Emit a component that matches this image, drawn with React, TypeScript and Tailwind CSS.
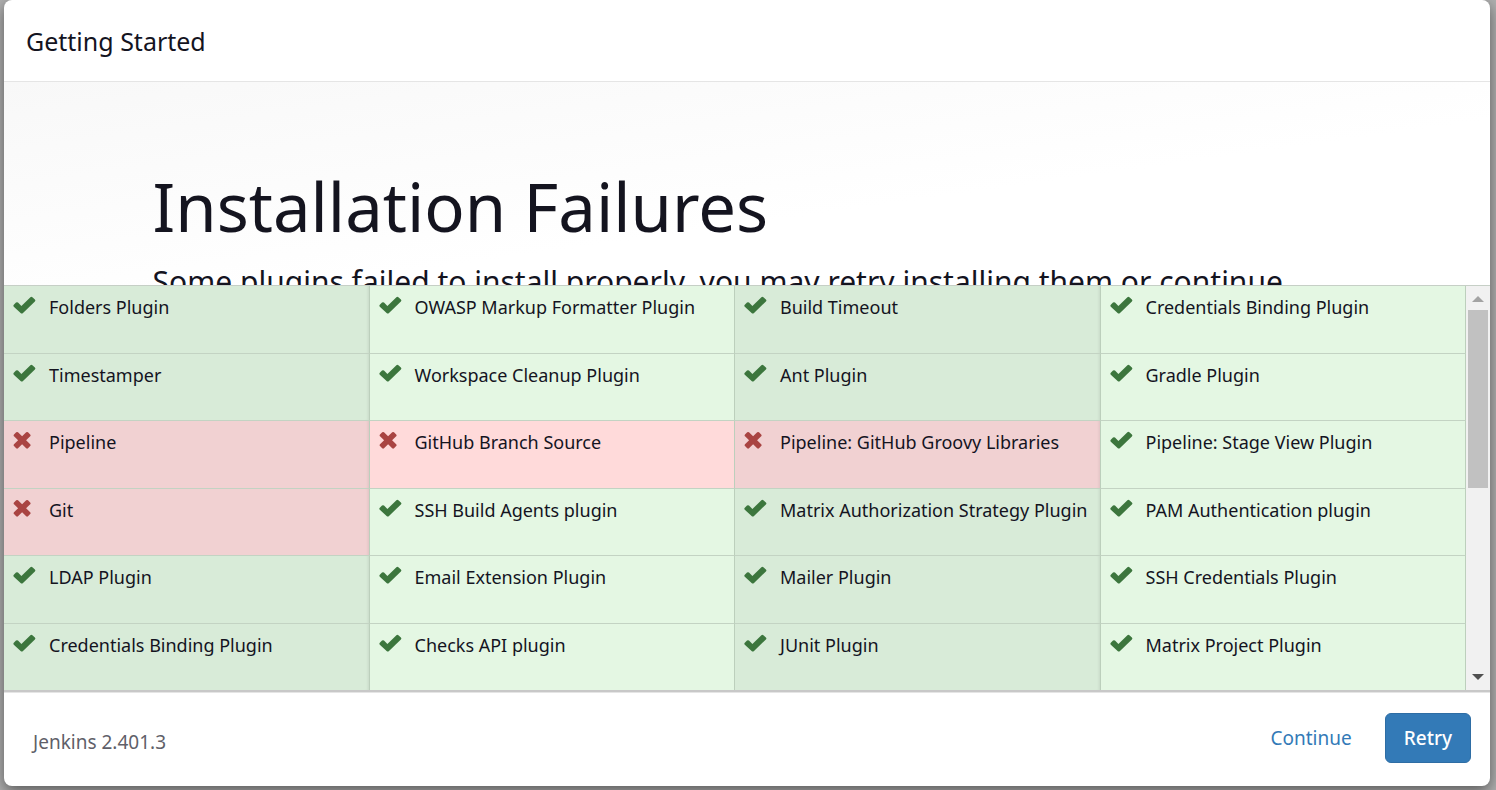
type Plugin = { name: string; failed?: boolean };

const plugins: Plugin[] = [
  { name: "Folders Plugin" },
  { name: "OWASP Markup Formatter Plugin" },
  { name: "Build Timeout" },
  { name: "Credentials Binding Plugin" },
  { name: "Timestamper" },
  { name: "Workspace Cleanup Plugin" },
  { name: "Ant Plugin" },
  { name: "Gradle Plugin" },
  { name: "Pipeline", failed: true },
  { name: "GitHub Branch Source", failed: true },
  { name: "Pipeline: GitHub Groovy Libraries", failed: true },
  { name: "Pipeline: Stage View Plugin" },
  { name: "Git", failed: true },
  { name: "SSH Build Agents plugin" },
  { name: "Matrix Authorization Strategy Plugin" },
  { name: "PAM Authentication plugin" },
  { name: "LDAP Plugin" },
  { name: "Email Extension Plugin" },
  { name: "Mailer Plugin" },
  { name: "SSH Credentials Plugin" },
  { name: "Credentials Binding Plugin" },
  { name: "Checks API plugin" },
  { name: "JUnit Plugin" },
  { name: "Matrix Project Plugin" },
];

function CheckIcon() {
  return (
    <svg viewBox="0 0 24 18" className="h-[18px] w-6 shrink-0" fill="#3c763d" aria-hidden="true">
      <path d="M1.800 8.800 4 6.600Q5 5.700 6 6.600l3.400 3.400L18.400 1.200q1-1 2 0l2.500 2.300q1 1 0 2L11 16.900q-1.200 1.100-2.400 0L1.800 10.700q-1-1 0-1.900Z" />
    </svg>
  );
}

function CrossIcon() {
  return (
    <svg viewBox="0 0 24 18" className="h-[18px] w-6 shrink-0" fill="#a94442" aria-hidden="true">
      <path d="M4.200 1.300q.9-.8 1.800 0L10.100 5.300 14.200 1.300q.9-.8 1.800 0l2.200 2.200q.8.900 0 1.800L14.100 9.300l4.100 4q.8.900 0 1.800L16 17.300q-.9.800-1.800 0L10.100 13.300 6 17.300q-.9.800-1.800 0L2 15.100q-.8-.9 0-1.800l4.100-4L2 5.300q-.8-.9 0-1.800Z" />
    </svg>
  );
}

function PluginCell({ plugin, odd }: { plugin: Plugin; odd: boolean }) {
  const color = plugin.failed
    ? odd ? "bg-[#f1d1d2]" : "bg-[#ffdada]"
    : odd ? "bg-[#d8ebd8]" : "bg-[#e4f7e3]";
  return (
    <li
      className={`flex min-h-0 items-start gap-3 border-r border-b border-r-[#bccfbc] border-b-[#c3d3c3] pt-[10px] pl-2 ${color} ${
        odd ? "shadow-[inset_-3px_0_3px_-2px_rgba(0,0,0,0.08)]" : ""
      }`}
    >
      {plugin.failed ? <CrossIcon /> : <CheckIcon />}
      <span className="pl-px text-[18px] leading-[22px] whitespace-nowrap">{plugin.name}</span>
    </li>
  );
}

export default function App() {
  return (
    <div className="h-screen overflow-hidden bg-[#b0b0b0] pr-[6px] pb-1 pl-1 font-['Noto_Sans',sans-serif] text-[#14141f]">
      <main className="flex h-full flex-col overflow-hidden rounded-lg bg-white shadow-[0_5px_15px_rgba(0,0,0,0.5)]">
        <header className="border-b border-[#e5e5e5] px-[22px] pt-[23px] pb-[22px]">
          <h4 className="text-[25px] leading-9">Getting Started</h4>
        </header>

        <section className="h-[203px] shrink-0 overflow-hidden bg-[linear-gradient(172deg,#f8f8f8,#ffffff_60%)] px-[10%] pt-[84px]">
          <h1 className="text-[67px] leading-20">Installation Failures</h1>
          <p className="pt-4 text-[30px] leading-10 whitespace-nowrap">
            Some plugins failed to install properly, you may retry installing them or continue
          </p>
        </section>

        <div className="flex min-h-0 flex-1 overflow-hidden border-t border-b-2 border-t-[#c6cfc6] border-b-[#c8c8c8]">
          <ul className="-mb-px grid flex-1 grid-cols-4 grid-rows-6">
            {plugins.map((plugin, i) => (
              <PluginCell key={i} plugin={plugin} odd={i % 2 === 0} />
            ))}
          </ul>
          <div className="flex w-6 flex-col bg-[#f1f1f1]" aria-hidden="true">
            <svg viewBox="0 0 24 24" className="size-6" fill="#a3a3a3"><path d="M6 16 12 10l6 6Z" /></svg>
            <div className="flex-1 px-[2px]">
              <div className="h-1/2 bg-[#c1c1c1]" />
            </div>
            <svg viewBox="0 0 24 24" className="size-6" fill="#505050"><path d="m6 8 6 6 6-6Z" /></svg>
          </div>
        </div>

        <footer className="flex shrink-0 items-start justify-between border-t border-[#e5e5e5] pt-5 pr-[19px] pb-[23px] pl-[29px]">
          <span className="pt-[15px] text-[19px] leading-7 text-[#5f5f69]">Jenkins 2.401.3</span>
          <div className="flex items-center gap-[14px]">
            <button type="button" className="h-[50px] px-[19px] text-[19px] text-[#337ab7]">Continue</button>
            <button type="button" className="h-[50px] rounded-md border border-[#2e6da4] bg-[#337ab7] px-[18px] text-[19px] font-medium text-white">Retry</button>
          </div>
        </footer>
      </main>
    </div>
  );
}
